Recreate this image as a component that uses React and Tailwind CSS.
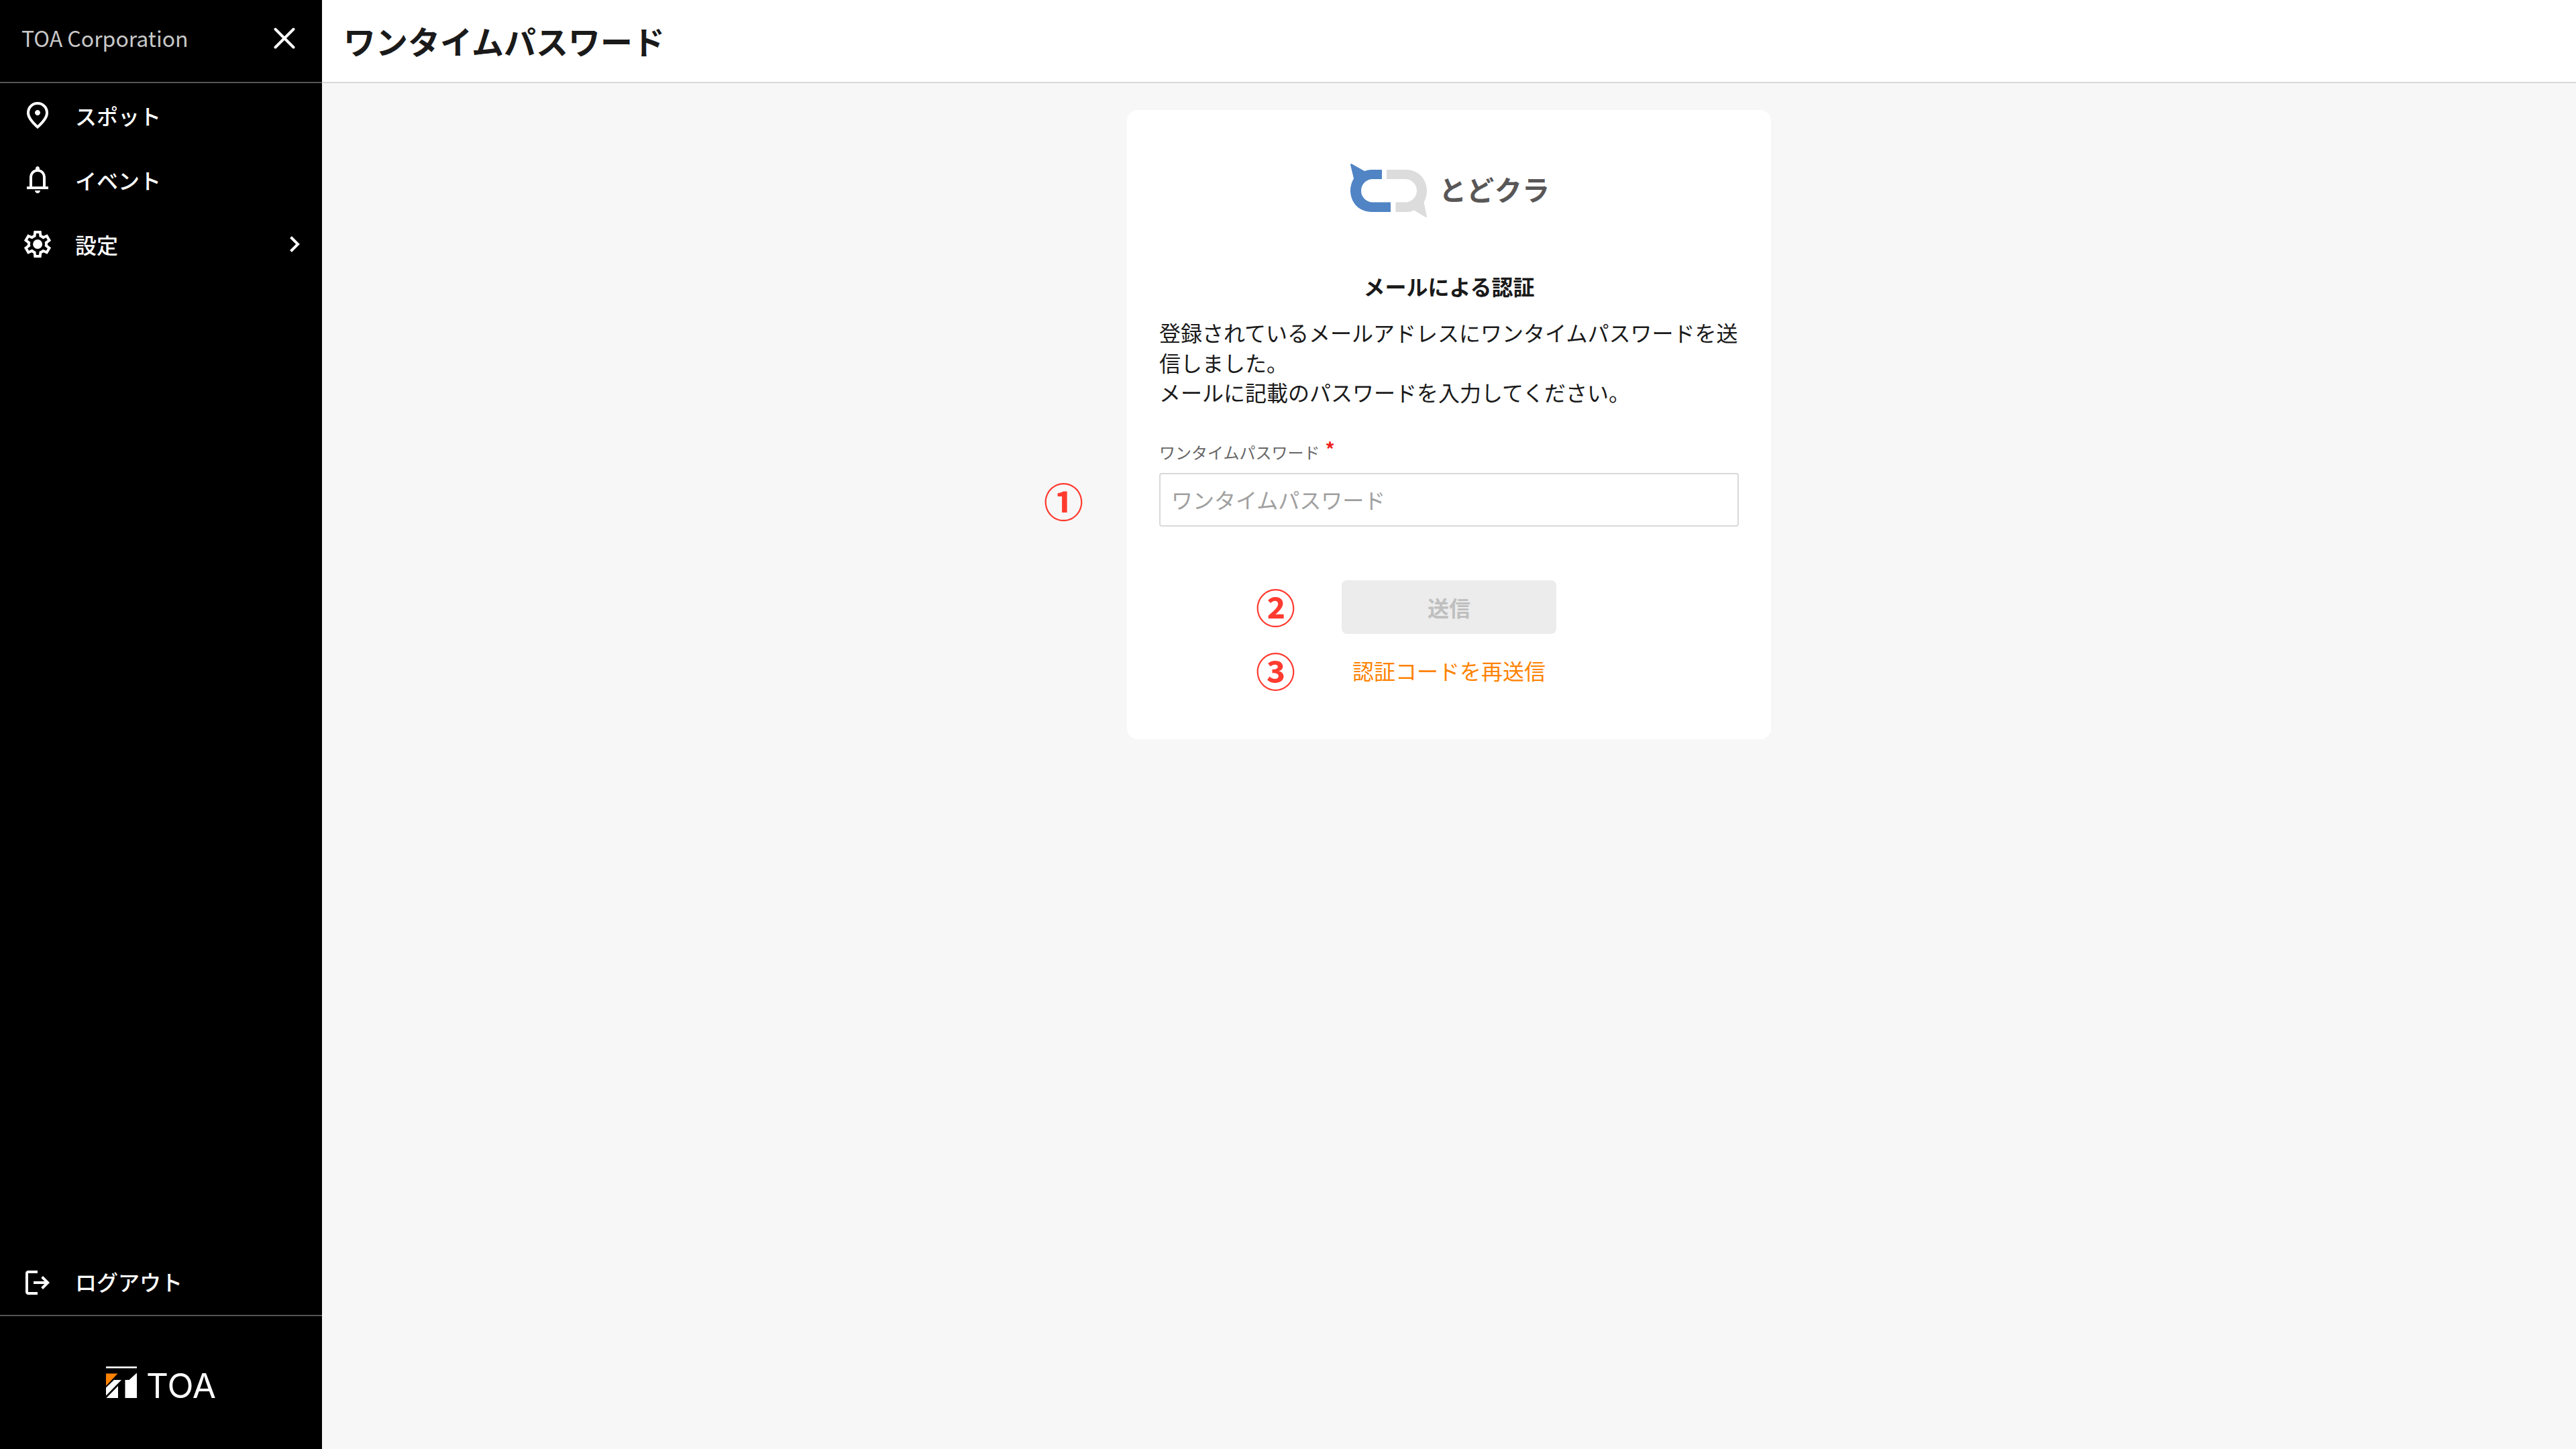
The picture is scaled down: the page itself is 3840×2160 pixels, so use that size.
// File: src/App.jsx
// Purpose: One time password page with the side navigation

import React, { useState } from 'react';

const icons = {
  spot: 'M12 12q.825 0 1.413-.587T14 10t-.587-1.412T12 8t-1.412.588T10 10t.588 1.413T12 12m0 7.35q3.05-2.8 4.525-5.087T18 10.2q0-2.725-1.737-4.462T12 4T7.738 5.738T6 10.2q0 1.775 1.475 4.063T12 19.35M12 22q-4.025-3.425-6.012-6.362T4 10.2q0-3.75 2.413-5.975T12 2t5.588 2.225T20 10.2q0 2.5-1.987 5.438T12 22',
  event: 'M4 19v-2h2v-7q0-2.075 1.25-3.687T10.5 4.2v-.7q0-.625.438-1.062T12 2t1.063.438T13.5 3.5v.7q2 .5 3.25 2.113T18 10v7h2v2zm8 3q-.825 0-1.412-.587T10 20h4q0 .825-.587 1.413T12 22m-4-5h8v-7q0-1.65-1.175-2.825T12 6T9.175 7.175T8 10z',
  settings: 'm9.25 22l-.4-3.2q-.325-.125-.612-.3t-.563-.375L4.7 19.375l-2.75-4.75l2.575-1.95Q4.5 12.5 4.5 12.338v-.675q0-.163.025-.338L1.95 9.375l2.75-4.75l2.975 1.25q.275-.2.575-.375t.6-.3l.4-3.2h5.5l.4 3.2q.325.125.613.3t.562.375l2.975-1.25l2.75 4.75l-2.575 1.95q.025.175.025.338v.674q0 .163-.05.338l2.575 1.95l-2.75 4.75l-2.95-1.25q-.275.2-.575.375t-.6.3l-.4 3.2zM11 20h1.975l.35-2.65q.775-.2 1.438-.587t1.212-.938l2.475 1.025l.975-1.7l-2.15-1.625q.125-.35.175-.737T17.5 12t-.05-.787t-.175-.738l2.15-1.625l-.975-1.7l-2.475 1.05q-.55-.575-1.212-.962t-1.438-.588L13 4h-1.975l-.35 2.65q-.775.2-1.437.588t-1.213.937L5.55 7.15l-.975 1.7l2.15 1.6q-.125.375-.175.75t-.05.8q0 .4.05.775t.175.75l-2.15 1.625l.975 1.7l2.475-1.05q.55.575 1.213.963t1.437.587zm1.05-4.5q1.45 0 2.475-1.025T15.55 12t-1.025-2.475T12.05 8.5q-1.475 0-2.488 1.025T8.55 12t1.013 2.475T12.05 15.5',
  logout: 'M5 21q-.825 0-1.412-.587T3 19V5q0-.825.588-1.412T5 3h7v2H5v14h7v2zm11-4l-1.375-1.45l2.55-2.55H9v-2h8.175l-2.55-2.55L16 7l5 5z'
};

const navItems = [
  { icon: 'spot', label: 'スポット' },
  { icon: 'event', label: 'イベント' },
  { icon: 'settings', label: '設定', hasChildren: true }
];

const Icon = ({ name }) => (
  <svg className="size-12 shrink-0" viewBox="0 0 24 24" fill="currentColor">
    <path d={icons[name]} />
  </svg>
);

const NavItem = ({ icon, label, hasChildren, labelClass = '' }) => (
  <a className="flex h-24 items-center px-8 text-white">
    <Icon name={icon} />
    <span className={`ml-8 flex-1 text-[32px] leading-[44.8px] font-medium ${labelClass}`}>{label}</span>
    {hasChildren && (
      <svg className="h-6 w-4" viewBox="0 0 16 24" fill="none" stroke="currentColor" strokeWidth="4">
        <path d="M1.5 1.5 12 12 1.5 22.5" />
      </svg>
    )}
  </a>
);

const ToaLogo = () => (
  <svg className="h-12 w-[164px] overflow-visible" viewBox="0 0 164 48">
    <g fill="#fff">
      <rect width="46" height="2.6" />
      <path d="M0 31.5 12 20H23L0 43.5z" />
      <path d="M18 29V47H0.5z" />
      <path d="M28.5 20H34.5L46 9.5V47H28.5z" />
      <text x="60" y="46.5" fontFamily="Inter" fontWeight="400" fontSize="50" textLength="104" lengthAdjust="spacingAndGlyphs">TOA</text>
    </g>
    <path d="M0 10.5H17.5L0 29z" fill="#ff8200" />
  </svg>
);

const TodokuraLogo = () => (
  <svg className="h-20 w-[296px] overflow-visible" viewBox="0 0 296 80">
    <path d="M2.5 0 22 11Q27 9 32 9H48V23H33A17.3 17.3 0 0 0 33 57.5H61V72H33C13 72 1 57 1 40Q1 31 6 22L1 1.5Q1 0 2.5 0z" fill="#5084c4" />
    <path d="M55 9H84C103 9 115 24 115 40Q115 50 110.5 57.5L115 79Q115 80 113.5 80L96 69.5Q91 72 84 72H68.5V57.5H84A17.3 17.3 0 0 0 84 23H55z" fill="#dcdcdc" />
    <text x="133" y="55" fill="#595757" fontWeight="700" fontSize="41" textLength="165">とどクラ</text>
  </svg>
);

const Sidebar = () => (
  <aside className="flex w-[480px] shrink-0 flex-col bg-black">
    <div className="flex h-[124px] items-center justify-between border-b-2 border-[#555] pr-10 pl-8">
      <span className="mb-2.5 text-[32px] leading-[44.8px] text-[#c8c8c8]">TOA Corporation</span>
      <svg className="mb-2 size-8" viewBox="0 0 32 32" stroke="#fff" strokeWidth="4" strokeLinecap="round">
        <path d="M2.5 2.5 29.5 29.5M29.5 2.5 2.5 29.5" />
      </svg>
    </div>
    <nav className="flex-1">
      {navItems.map((item) => (
        <NavItem key={item.label} {...item} />
      ))}
    </nav>
    <NavItem icon="logout" label="ログアウト" labelClass="mb-1" />
    <div className="flex h-[200px] items-center justify-center border-t-2 border-[#555]">
      <ToaLogo />
    </div>
  </aside>
);

// Numbered callout placed beside a form control
const Marker = ({ children, className }) => (
  <span className={`absolute text-[59px] leading-[60px] font-bold text-[#ff3b30] ${className}`}>
    {children}
  </span>
);

const PasswordCard = () => {
  const [password, setPassword] = useState('');

  return (
    <section className="flex h-[938px] w-[960px] flex-col items-center rounded-2xl bg-white px-12 pt-20">
      <TodokuraLogo />
      <h2 className="mt-20 text-[32px] leading-[44.8px] font-bold">メールによる認証</h2>
      <p className="mt-6 w-full text-[32px] leading-[44.8px]">
        登録されているメールアドレスにワンタイムパスワードを送信しました。
        <br />
        メールに記載のパスワードを入力してください。
      </p>
      <label className="mt-[50px] flex w-full text-2xl leading-[33.6px] text-[#666]">
        ワンタイムパスワード
        <span className="ml-2 text-[28px] leading-[25px] font-bold text-[#ee221c]">*</span>
      </label>
      <div className="relative mt-[14px] w-full">
        <Marker className="top-[11px] -left-[172px]">①</Marker>
        <input
          className="block h-20 w-full rounded-sm border-2 border-[#d9d9d9] px-4 pb-0.5 text-[32px] placeholder:text-[#a0a0a0]"
          placeholder="ワンタイムパスワード"
          value={password}
          onChange={(e) => setPassword(e.target.value)}
        />
      </div>
      <div className="relative mt-20">
        <Marker className="top-[9px] -left-[128px]">②</Marker>
        <button className="h-20 w-80 rounded-lg bg-[#ececec] text-[32px] font-bold text-[#bfbfbf]" disabled>
          送信
        </button>
      </div>
      <div className="relative mt-8 w-80 text-center">
        <Marker className="-top-2 -left-[128px]">③</Marker>
        <a className="text-[32px] leading-[44.8px] text-[#ff8200]">認証コードを再送信</a>
      </div>
    </section>
  );
};

const App = () => (
  <div
    lang="ja"
    className="flex h-[2160px] w-[3840px] bg-[#f7f7f7] font-['Noto_Sans_CJK_JP',sans-serif] text-[#1a1a1a]"
  >
    <Sidebar />
    <main className="flex flex-1 flex-col">
      <header className="flex h-[124px] items-center border-b-2 border-[#d9d9d9] bg-white px-8">
        <h1 className="mb-0.5 text-[48px] leading-[67px] font-bold">ワンタイムパスワード</h1>
      </header>
      <div className="flex justify-center pt-10">
        <PasswordCard />
      </div>
    </main>
  </div>
);

export default App;
